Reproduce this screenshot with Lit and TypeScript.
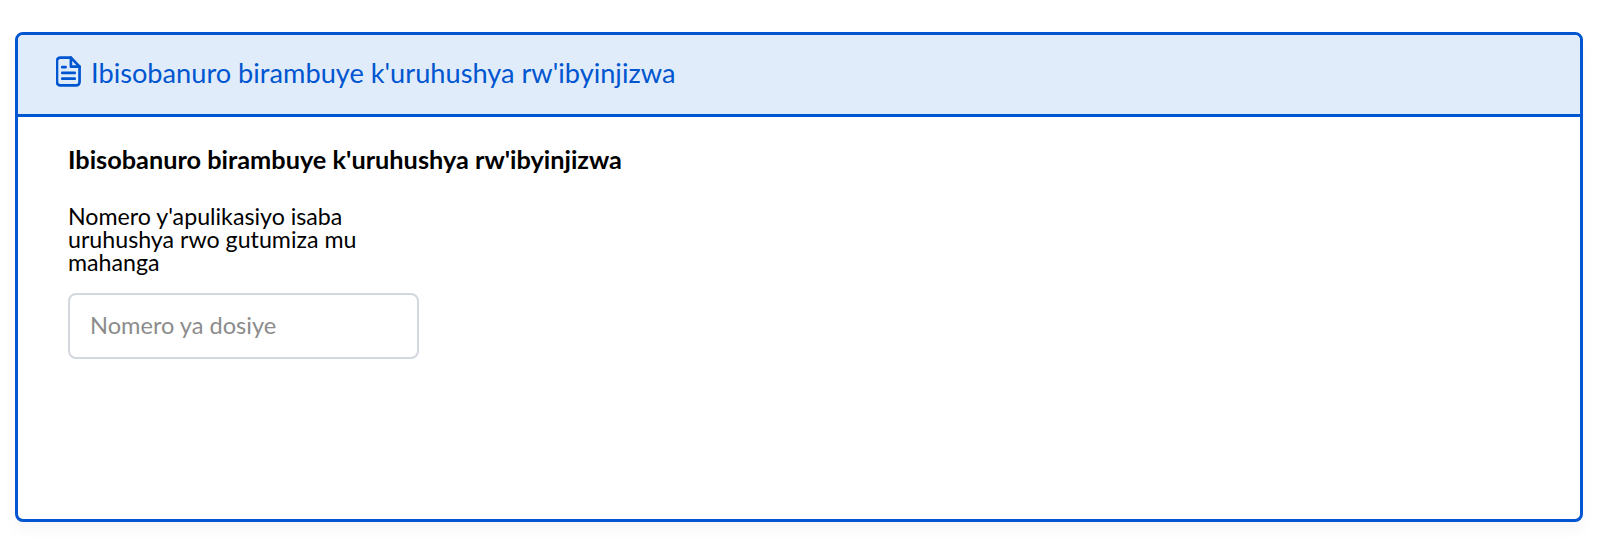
import { LitElement, css, html } from "lit";
import { customElement } from "lit/decorators.js";

@customElement("app-root")
export class AppRoot extends LitElement {
  static styles = css`
    :host {
      display: block;
      box-sizing: border-box;
      height: 538px;
      padding: 32px 17px 16px 15px;
      background: #fff;
      font-family: Lato, "Noto Sans", sans-serif;
      color: #000;
    }
    .card {
      box-sizing: border-box;
      height: 490px;
      border: 3px solid #0055d0;
      border-radius: 8px;
      box-shadow: 0 8px 16px rgba(0, 0, 0, 0.04);
      overflow: hidden;
    }
    .card-header {
      box-sizing: border-box;
      height: 82px;
      display: flex;
      align-items: center;
      gap: 10px;
      padding: 0 0 4px 38px;
      background: #e0ecf9;
      border-bottom: 3px solid #0055d0;
      color: #0055d0;
      font-size: 27.2px;
    }
    .card-header svg {
      display: block;
      flex: none;
      margin-top: -2px;
    }
    .card-body {
      padding: 26px 50px;
    }
    h3 {
      margin: 0 0 30px;
      font-size: 25.3px;
      line-height: 32px;
      font-weight: 700;
    }
    label {
      display: block;
      width: 310px;
      font-size: 23.2px;
      line-height: 23px;
      margin-bottom: 19px;
    }
    .field {
      box-sizing: border-box;
      width: 351px;
      height: 66px;
      display: block;
      padding: 0 20px 3px;
      border: 2px solid #d3d7df;
      border-radius: 8px;
      font: inherit;
      font-size: 23.6px;
      outline: none;
      background: #fff;
    }
    .field::placeholder {
      color: #8c8c8c;
      opacity: 1;
    }
  `;

  render() {
    return html`
      <div class="card">
        <div class="card-header">
          <svg width="25" height="31" viewBox="0 0 26 32" fill="none" stroke="currentColor" stroke-width="2.8" stroke-linecap="round" stroke-linejoin="round">
            <path d="M4.5 1.5h11l9 9.5v16a3.5 3.5 0 0 1-3.5 3.5H4.5A3.5 3.5 0 0 1 1 27V5a3.5 3.5 0 0 1 3.5-3.5z" />
            <path d="M15.5 1.5V11h9" />
            <path d="M6.5 11.5h3.5M6.5 17.5h13M6.5 23.5h13" />
          </svg>
          <span>Ibisobanuro birambuye k'uruhushya rw'ibyinjizwa</span>
        </div>
        <div class="card-body">
          <h3>Ibisobanuro birambuye k'uruhushya rw'ibyinjizwa</h3>
          <label for="dosiye">Nomero y'apulikasiyo isaba uruhushya rwo gutumiza mu mahanga</label>
          <input id="dosiye" class="field" type="text" placeholder="Nomero ya dosiye" />
        </div>
      </div>
    `;
  }
}
